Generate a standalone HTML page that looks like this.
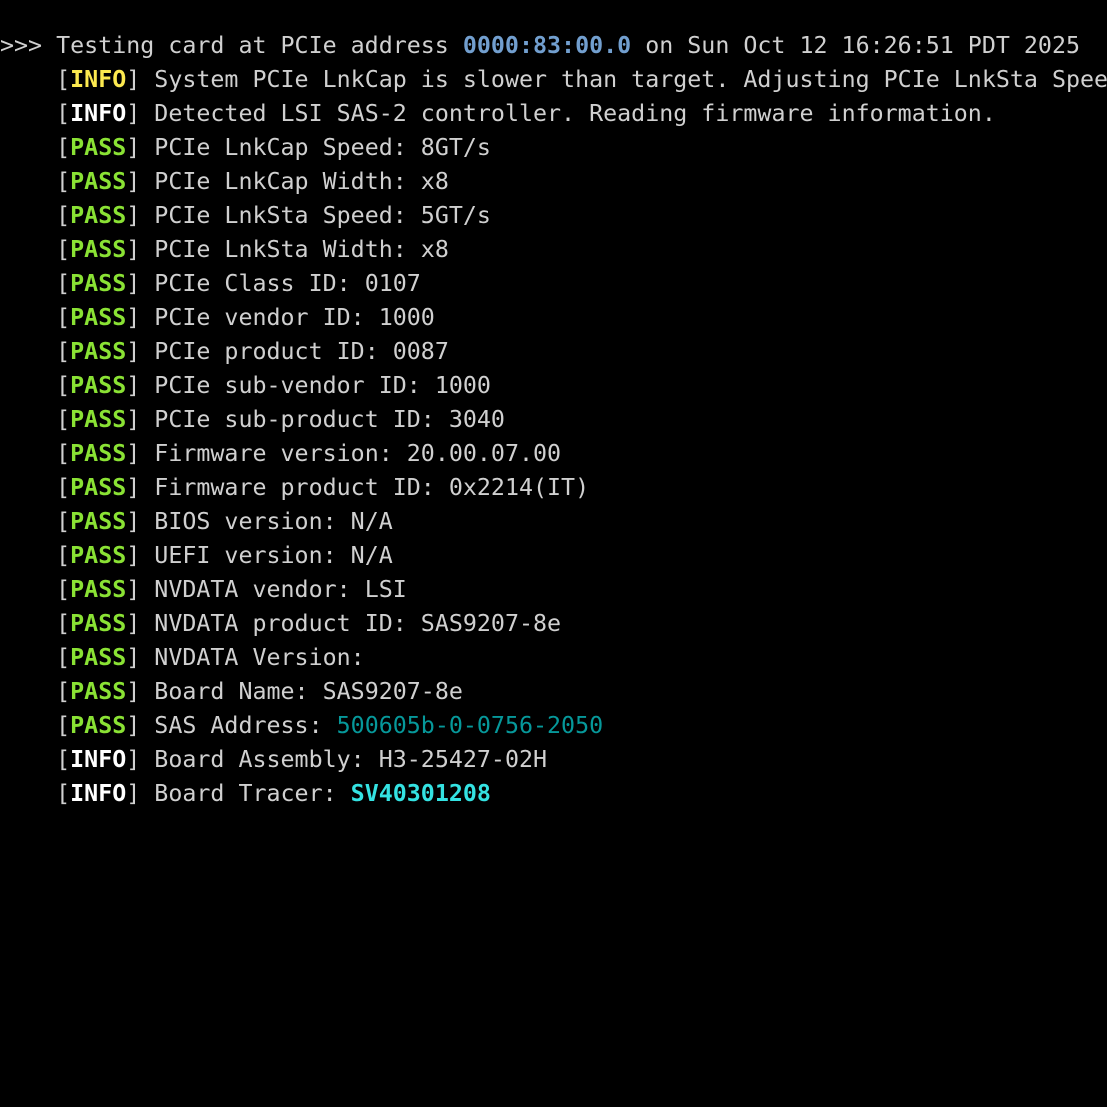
<!DOCTYPE html>
<html><head><meta charset="utf-8"><style>
html,body{margin:0;background:#000;width:1107px;height:1107px;overflow:hidden}
pre{margin:0;padding-top:29px;font-family:"DejaVu Sans Mono","Liberation Mono",monospace;font-size:23.3px;line-height:34px;color:#d0d0d0;white-space:pre}
.y{color:#fce94f;font-weight:bold}.w{color:#fff;font-weight:bold}.g{color:#8ae234;font-weight:bold}
.b{color:#729fcf;font-weight:bold}.t{color:#06989a}.c{color:#34e2e2;font-weight:bold}
</style></head><body><pre>&gt;&gt;&gt; Testing card at PCIe address <span class="b">0000:83:00.0</span> on Sun Oct 12 16:26:51 PDT 2025
    [<span class="y">INFO</span>] System PCIe LnkCap is slower than target. Adjusting PCIe LnkSta Speed
    [<span class="w">INFO</span>] Detected LSI SAS-2 controller. Reading firmware information.
    [<span class="g">PASS</span>] PCIe LnkCap Speed: 8GT/s
    [<span class="g">PASS</span>] PCIe LnkCap Width: x8
    [<span class="g">PASS</span>] PCIe LnkSta Speed: 5GT/s
    [<span class="g">PASS</span>] PCIe LnkSta Width: x8
    [<span class="g">PASS</span>] PCIe Class ID: 0107
    [<span class="g">PASS</span>] PCIe vendor ID: 1000
    [<span class="g">PASS</span>] PCIe product ID: 0087
    [<span class="g">PASS</span>] PCIe sub-vendor ID: 1000
    [<span class="g">PASS</span>] PCIe sub-product ID: 3040
    [<span class="g">PASS</span>] Firmware version: 20.00.07.00
    [<span class="g">PASS</span>] Firmware product ID: 0x2214(IT)
    [<span class="g">PASS</span>] BIOS version: N/A
    [<span class="g">PASS</span>] UEFI version: N/A
    [<span class="g">PASS</span>] NVDATA vendor: LSI
    [<span class="g">PASS</span>] NVDATA product ID: SAS9207-8e
    [<span class="g">PASS</span>] NVDATA Version:
    [<span class="g">PASS</span>] Board Name: SAS9207-8e
    [<span class="g">PASS</span>] SAS Address: <span class="t">500605b-0-0756-2050</span>
    [<span class="w">INFO</span>] Board Assembly: H3-25427-02H
    [<span class="w">INFO</span>] Board Tracer: <span class="c">SV40301208</span>
</pre></body></html>
